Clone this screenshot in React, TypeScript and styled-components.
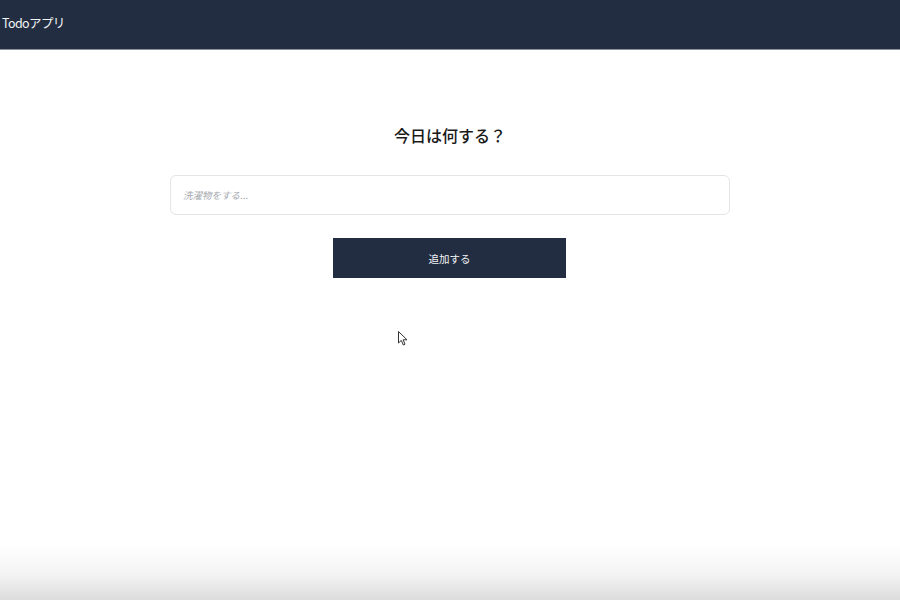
import React from "react";
import styled, { createGlobalStyle } from "styled-components";

const Global = createGlobalStyle`
  html, body { margin: 0; padding: 0; background: #ffffff; }
  body { font-family: "Noto Sans CJK JP", "Noto Sans", sans-serif; }
  * { box-sizing: border-box; }
`;

const Page = styled.div`
  position: relative;
  width: 900px;
  height: 600px;
  overflow: hidden;
  background: #ffffff;
`;

const Header = styled.header`
  height: 50px;
  background: #222d41;
  border-bottom: 1px solid #8a8f98;
  display: flex;
  align-items: center;
  padding: 0 2px 4px;
`;

const Brand = styled.h1`
  margin: 0;
  color: #f3f4f6;
  font-family: "Noto Sans CJK JP", sans-serif;
  font-size: 12.5px;
  font-weight: 400;
  letter-spacing: -0.6px;
`;

const Main = styled.main`
  display: flex;
  flex-direction: column;
  align-items: center;
  padding-top: 72px;
`;

const Title = styled.h2`
  margin: 0;
  font-size: 16px;
  font-weight: 500;
  color: #1a1a1a;
  line-height: 26px;
`;

const Form = styled.form`
  display: flex;
  flex-direction: column;
  align-items: center;
  gap: 23px;
  margin-top: 27px;
`;

const Input = styled.input`
  width: 560px;
  height: 40px;
  border: 1px solid #e3e5e8;
  border-radius: 6px;
  padding: 0 12px;
  font-family: "Noto Sans CJK JP", sans-serif;
  font-size: 9.5px;
  outline: none;
  &::placeholder {
    color: #a4a8ae;
    font-style: italic;
  }
`;

const Button = styled.button`
  width: 233px;
  height: 40px;
  margin-left: -1px;
  background: #222d41;
  color: #f3f4f6;
  border: none;
  font-family: "Noto Sans CJK JP", sans-serif;
  font-size: 10.5px;
  cursor: pointer;
`;

const Cursor = styled.svg`
  position: absolute;
  left: 398px;
  top: 331px;
`;

const BottomFade = styled.div`
  position: absolute;
  left: 0;
  right: 0;
  bottom: 0;
  height: 55px;
  background: linear-gradient(to bottom, rgba(220,220,220,0) 0%, rgba(235,235,235,0.6) 55%, #dcdcdc 100%);
  pointer-events: none;
`;

export default function App() {
  return (
    <>
      <Global />
      <Page>
        <Header>
          <Brand>Todoアプリ</Brand>
        </Header>
        <Main>
          <Title>今日は何する？</Title>
          <Form onSubmit={(e) => e.preventDefault()}>
            <Input placeholder="洗濯物をする..." />
            <Button type="submit">追加する</Button>
          </Form>
        </Main>
        <Cursor width="12" height="16" viewBox="0 0 12 16">
          <path d="M0.5 0.5 L0.5 12 L3.3 9.4 L5.3 14 L7 13.2 L5.1 8.8 L9 8.8 Z" fill="#ffffff" stroke="#333" strokeWidth="1" strokeLinejoin="round" />
        </Cursor>
        <BottomFade />
      </Page>
    </>
  );
}
